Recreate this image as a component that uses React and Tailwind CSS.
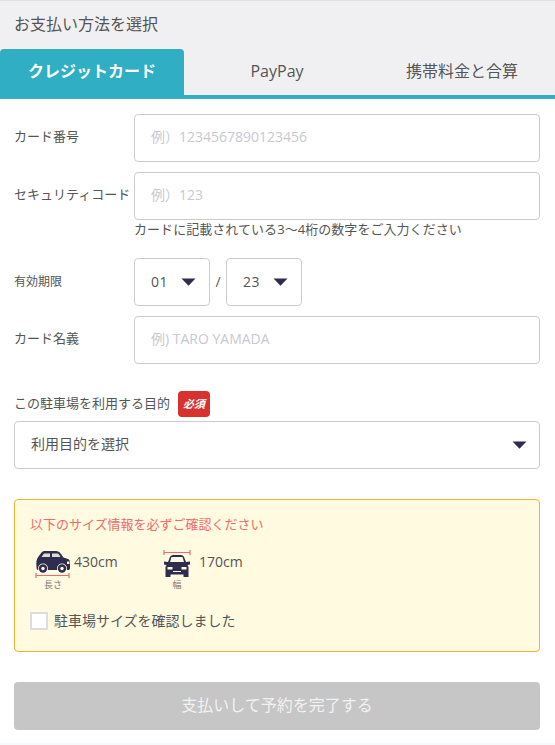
const FONT = '"Open Sans", "Noto Sans CJK JP", sans-serif';

function Caret({ className = "" }) {
  return (
    <svg width="15" height="8" viewBox="0 0 15 8" className={className}>
      <path d="M0.5 0.5H14.5L7.5 7.8Z" fill="#2e2c4f" />
    </svg>
  );
}

function SideCar() {
  return (
    <svg width="36" height="30" viewBox="0 0 36 30">
      <path d="M1.5 18 C1 13 1.5 10 3.5 7.5 L6.5 3.5 C7.5 2.4 9 2 10.5 2 L21 2 C23 2 24.5 2.8 26 5 L28.5 8.5 L33 10 C34.5 10.5 35 12 35 14 L35 19 C35 20.5 34 21 33 21 L3 21 C2 21 1.5 20 1.5 18 Z" fill="#2e2c4f" />
      <path d="M9 4.5 H15 V8 H6.5 Z M17 4.5 H22 C23 4.5 23.8 5 24.3 6 L25.5 8 H17 Z" fill="#fffae0" opacity="0.85" />
      <rect x="32" y="12.5" width="2.5" height="2.5" fill="#fffae0" />
      <circle cx="8" cy="19.5" r="5" fill="#fffae0" /><circle cx="8" cy="19.5" r="4.2" fill="#2e2c4f" /><circle cx="8" cy="19.5" r="1.7" fill="#fffae0" />
      <circle cx="27" cy="19.5" r="5" fill="#fffae0" /><circle cx="27" cy="19.5" r="4.2" fill="#2e2c4f" /><circle cx="27" cy="19.5" r="1.7" fill="#fffae0" />
      <path d="M1 26.5 H34 M1 24 V29 M34 24 V29" stroke="#f0696c" strokeWidth="1.2" fill="none" />
    </svg>
  );
}

function FrontCar() {
  return (
    <svg width="28" height="30" viewBox="0 0 28 30">
      <path d="M1 3.5 H27 M1 1 V6 M27 1 V6" stroke="#f0696c" strokeWidth="1.2" fill="none" />
      <path d="M5 13 L7 8 C7.5 7 8.5 6 10 6 H18 C19.5 6 20.5 7 21 8 L23 13 L27 12.5 V15.5 L24.5 16 L25.5 18 V28 H20.5 V25.5 H7.5 V28 H2.5 V18 L3.5 16 L1 15.5 V12.5 Z" fill="#2e2c4f" />
      <path d="M8.5 8 H19.5 L21 13 H7 Z" fill="#fffae0" />
      <rect x="4.5" y="18" width="5" height="2.5" fill="#fffae0" /><rect x="18.5" y="18" width="5" height="2.5" fill="#fffae0" />
      <rect x="10" y="22" width="8" height="1" fill="#fffae0" />
    </svg>
  );
}

function Field({ label, placeholder }) {
  return (
    <div className="flex items-center">
      <div className="w-[120px] shrink-0 whitespace-nowrap pb-[2px] text-[13px] text-[#555]">{label}</div>
      <div className="flex h-12 flex-1 items-center rounded border border-[#ccc] bg-white pb-[2px] pl-4 text-sm text-[#c8c8d0]">
        {placeholder}
      </div>
    </div>
  );
}

function MonthSelect({ value }) {
  return (
    <div className="flex h-12 w-[76px] items-center justify-between rounded border border-[#ccc] bg-white pl-4 pr-[13px] text-sm text-[#555]">
      <span className="tracking-[0.5px]">{value}</span>
      <Caret />
    </div>
  );
}

export default function App() {
  return (
    <div className="min-h-[745px] w-[555px] bg-white" style={{ fontFamily: FONT }}>
      <div className="border-t border-[#e0e0e2] bg-[#f0f0f3]">
        <div className="flex h-[48px] items-center pb-[2px] pl-[14px] text-base text-[#555]">お支払い方法を選択</div>
        <div className="flex h-[50px] border-b-[4px] border-[#30aec4]">
          <div className="flex w-[184px] items-center justify-center rounded-t bg-[#30aec4] pb-[2px] text-base font-bold text-white">クレジットカード</div>
          <div className="flex w-[186px] items-center justify-center pb-[2px] text-base text-[#555]">PayPay</div>
          <div className="flex flex-1 items-center justify-center pb-[2px] pr-[1px] text-base text-[#555]">携帯料金と合算</div>
        </div>
      </div>

      <div className="pl-[14px] pr-[15px] pt-[15px]">
        <Field label="カード番号" placeholder="例）1234567890123456" />
        <div className="mt-[10px]">
          <Field label="セキュリティコード" placeholder="例）123" />
          <div className="ml-[120px] mt-[1px] text-[13px] leading-[17px] tracking-[0.05px] text-[#555]">カードに記載されている3〜4桁の数字をご入力ください</div>
        </div>
        <div className="mt-[20px] flex items-center">
          <div className="w-[120px] shrink-0 text-xs text-[#555]">有効期限</div>
          <MonthSelect value="01" />
          <span className="w-4 text-center text-sm text-[#555]">/</span>
          <MonthSelect value="23" />
        </div>
        <div className="mt-[10px]">
          <Field label="カード名義" placeholder="例) TARO YAMADA" />
        </div>

        <div className="mt-[27px] flex h-[26px] items-center text-[13px] text-[#555]">
          この駐車場を利用する目的
          <span className="ml-[8px] flex h-[26px] w-[32px] items-center justify-center rounded-sm bg-[#d8322f] text-[11px] font-bold italic text-white">必須</span>
        </div>
        <div className="mt-[4px] flex h-12 items-center justify-between rounded border border-[#ccc] bg-white pl-4 pr-[12px] text-sm text-[#555]">
          <span className="-mt-[2px]">利用目的を選択</span>
          <Caret />
        </div>

        <div className="mt-[30px] h-[153px] rounded border border-[#efb136] bg-[#fffae0] px-[15px] pt-[15px]">
          <div className="text-[13px] leading-[18px] text-[#f0696c]">以下のサイズ情報を必ずご確認ください</div>
          <div className="mt-[16px] flex">
            <div className="flex w-[133px] pl-[5px]">
              <div className="flex flex-col items-center">
                <SideCar />
                <span className="text-[9px] leading-[12px] text-[#777]">長さ</span>
              </div>
              <span className="ml-[3px] mt-[4px] text-sm leading-[18px] text-[#555]">430cm</span>
            </div>
            <div className="flex">
              <div className="flex flex-col items-center">
                <FrontCar />
                <span className="text-[9px] leading-[12px] text-[#777]">幅</span>
              </div>
              <span className="ml-[8px] mt-[4px] text-sm leading-[18px] text-[#555]">170cm</span>
            </div>
          </div>
          <div className="mt-[20px] flex items-center">
            <span className="h-[18px] w-[18px] border-2 border-[#ddd] bg-white" />
            <span className="ml-[6px] text-sm text-[#555]">駐車場サイズを確認しました</span>
          </div>
        </div>

        <div className="mt-[30px] flex h-12 items-center justify-center rounded bg-[#c6c6c6] pb-[2px] text-base text-[#f2f2f2]">支払いして予約を完了する</div>
      </div>
      <div className="mt-[13px] h-[2px] bg-[#f3fbfb]" />
    </div>
  );
}
